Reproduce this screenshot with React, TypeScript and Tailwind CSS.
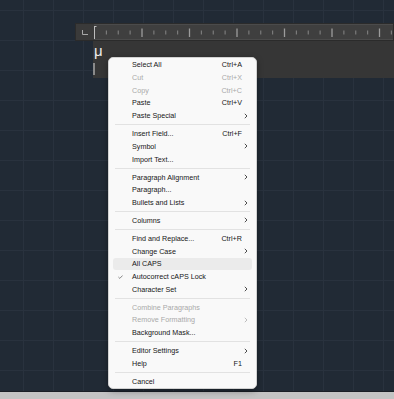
import React from "react"

interface Item {
    label: string,
    shortcut?: string,
    sub?: boolean,
    disabled?: boolean,
    checked?: boolean,
    active?: boolean
}

// null = separator
const menu: (Item | null)[] = [
    { label: 'Select All', shortcut: 'Ctrl+A' },
    { label: 'Cut', shortcut: 'Ctrl+X', disabled: true },
    { label: 'Copy', shortcut: 'Ctrl+C', disabled: true },
    { label: 'Paste', shortcut: 'Ctrl+V' },
    { label: 'Paste Special', sub: true },
    null,
    { label: 'Insert Field...', shortcut: 'Ctrl+F' },
    { label: 'Symbol', sub: true },
    { label: 'Import Text...' },
    null,
    { label: 'Paragraph Alignment', sub: true },
    { label: 'Paragraph...' },
    { label: 'Bullets and Lists', sub: true },
    null,
    { label: 'Columns', sub: true },
    null,
    { label: 'Find and Replace...', shortcut: 'Ctrl+R' },
    { label: 'Change Case', sub: true },
    { label: 'All CAPS', active: true },
    { label: 'Autocorrect cAPS Lock', checked: true },
    { label: 'Character Set', sub: true },
    null,
    { label: 'Combine Paragraphs', disabled: true },
    { label: 'Remove Formatting', sub: true, disabled: true },
    { label: 'Background Mask...' },
    null,
    { label: 'Editor Settings', sub: true },
    { label: 'Help', shortcut: 'F1' },
    null,
    { label: 'Cancel' },
]

function Ruler() {
    const ticks = []
    for (let i = 1; i < 28; i++) {
        const x = 0.5 + i * 11.875
        const major = i % 4 === 0
        ticks.push(
            <line key={i} x1={x} x2={x} y1={major ? 3.5 : 5.5} y2={major ? 12 : 9.5}
                stroke={major ? '#9c9c9c' : '#808080'} strokeWidth={major ? 1.3 : 1.1} />
        )
    }
    return (
        <svg width="300" height="16" className="block">
            <path d="M0.5 1 V15 M0 1.5 H2.5 M0 14.5 H2.5" stroke="#bdbdbd" strokeWidth="1" fill="none" />
            {ticks}
        </svg>
    )
}

function Chevron({ disabled }: { disabled?: boolean }) {
    return (
        <svg width="4" height="6" viewBox="0 0 4 6">
            <path d="M0.8 0.8 L3 3 L0.8 5.2" stroke={disabled ? '#b5b5b5' : '#3a3a3a'} strokeWidth="0.9" fill="none" />
        </svg>
    )
}

function MenuRow({ item }: { item: Item }) {
    const color = item.disabled ? 'text-[#a9a9a9]' : 'text-[#161616]'
    return (
        <div className={`relative mx-[4px] flex items-center h-[12.7px] pl-[19px] rounded-[3px] ${item.active ? 'bg-[#ebebeb]' : ''} ${color}`}>
            {item.checked && (
                <svg width="5" height="4" viewBox="0 0 5 4" className="absolute left-[5px] top-[4.5px]">
                    <path d="M0.4 2 L1.8 3.4 L4.6 0.5" stroke="#6a6a6a" strokeWidth="0.8" fill="none" />
                </svg>
            )}
            <span className="flex-1 leading-none whitespace-nowrap">{item.label}</span>
            {item.shortcut && <span className="leading-none">{item.shortcut}</span>}
            <span className="w-[10px] pl-[2px] flex items-center">
                {item.sub && <Chevron disabled={item.disabled} />}
            </span>
        </div>
    )
}

export default function App() {
    return (
        <div className="relative w-[394px] h-[399px] overflow-hidden flex flex-col bg-[#212a35] bg-[linear-gradient(to_right,#29323e_1px,transparent_1px),linear-gradient(to_bottom,#29323e_1px,transparent_1px)] bg-size-[30px_30px] bg-position-[23px_10px] font-['Liberation_Sans',Arial,sans-serif]">
            {/* ruler bar */}
            <div className="mt-[23px] ml-[75px] h-[18px] flex bg-[#3a3a3a] border border-[#2b2b2b]">
                <div className="w-[18px] flex items-center justify-center">
                    <svg width="6" height="5" viewBox="0 0 6 5">
                        <path d="M0.5 0 V4.5 H6" stroke="#a8a8a8" strokeWidth="1" fill="none" />
                    </svg>
                </div>
                <div className="flex-1 bg-[#3f3f3f] border-y border-[#4b4b4b] overflow-hidden">
                    <Ruler />
                </div>
            </div>

            {/* editor area */}
            <div className="ml-[93px] h-[37px] bg-[#363636] flex flex-col">
                <span className="text-[15px] leading-[15px] mt-[2px] ml-[1px] text-[#ececec]">μ</span>
                <div className="mt-[5px] w-[2px] h-[12px] bg-[#8a8a8a]"></div>
            </div>

            <div className="flex-1"></div>
            <div className="h-[8px] bg-[#c4c4c4] border-t border-[#1a1f26]"></div>

            {/* context menu */}
            <div className="absolute left-[108px] top-[56.7px] w-[149px] bg-[#f9f9f9] border border-[#d2d2d2] rounded-[5px] shadow-[0_2px_6px_rgba(0,0,0,0.35)] pt-[1px] text-[7.2px]">
                {menu.map((item, idx) => {
                    if (!item) {
                        return (
                            <div key={idx} className="h-[5.3px] flex items-center px-[6px]">
                                <div className="h-px w-full bg-[#e2e2e2]"></div>
                            </div>
                        )
                    }
                    return <MenuRow key={idx} item={item} />
                })}
            </div>
        </div>
    )
}
